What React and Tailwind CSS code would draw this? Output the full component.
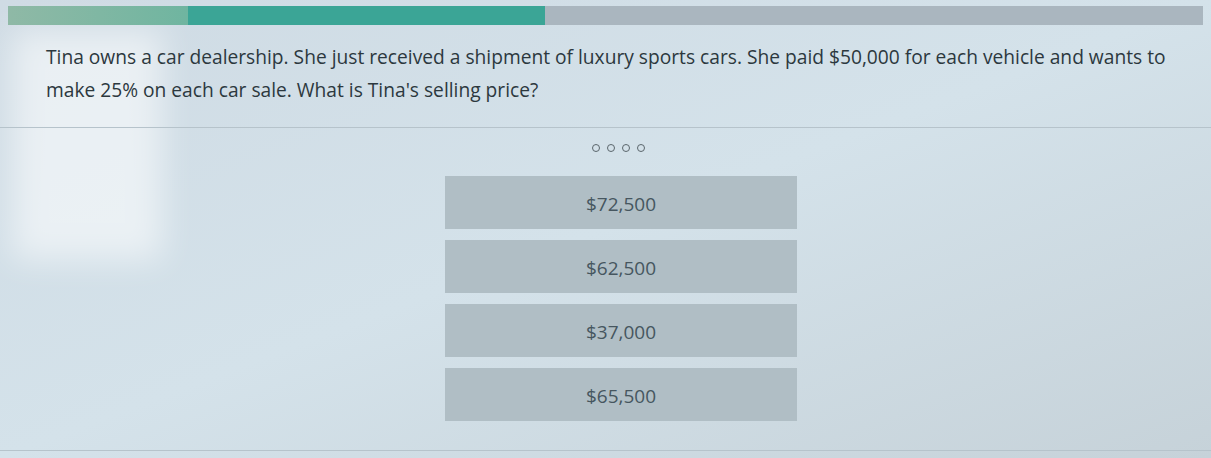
const answers = ['$72,500', '$62,500', '$37,000', '$65,500'];

export default function App() {
  return (
    <div className="relative w-[1211px] h-[458px] overflow-hidden bg-gradient-to-br from-[#cfdbe4] via-[#d4e2ea] to-[#c6d2d9] font-['Open_Sans',sans-serif]">
      {/* soft glare on the left */}
      <div className="absolute left-[12px] top-[30px] w-[150px] h-[230px] bg-white/55 blur-[16px] pointer-events-none" />

      <div className="relative flex flex-col h-full">
        {/* progress */}
        <div className="flex h-[19px] mt-[6px] mx-[8px]">
          <div className="w-[180px] bg-gradient-to-r from-[#8fb9a6] to-[#6fb5a0]" />
          <div className="w-[357px] bg-[#3ba596]" />
          <div className="flex-1 bg-[#aab6bf]" />
        </div>

        <p className="mt-[15px] pl-[46px] pr-[44px] text-[#2c383e] text-[19.2px] leading-[33px]">
          Tina owns a car dealership. She just received a shipment of luxury sports cars. She paid $50,000 for each vehicle and wants to make 25% on each car sale. What is Tina's selling price?
        </p>

        <div className="mt-[21px] border-t border-[#b6c3cb]" />

        <div className="flex justify-center gap-[7px] mt-[16px] ml-[26px]">
          {[0, 1, 2, 3].map((i) => (
            <span key={i} className="w-[8px] h-[8px] rounded-full border-[1.5px] border-[#5b666c]" />
          ))}
        </div>

        <div className="flex flex-col gap-[11px] mt-[24px] ml-[445px] w-[352px]">
          {answers.map((a) => (
            <div key={a} className="h-[53px] pt-[4px] flex items-center justify-center bg-[#b0bec5] text-[#46565f] text-[19px]">
              {a}
            </div>
          ))}
        </div>

        <div className="mt-auto mb-[7px] border-t border-[#b6c3cb]" />
      </div>
    </div>
  );
}
